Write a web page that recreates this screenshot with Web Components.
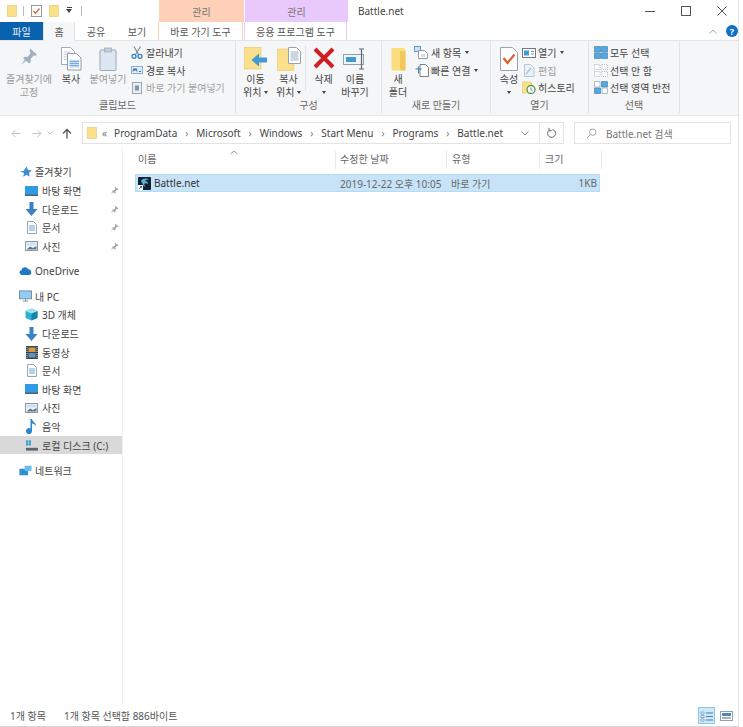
<!DOCTYPE html>
<html lang="ko">
<head>
<meta charset="utf-8">
<title>Battle.net</title>
<style>
html,body{margin:0;padding:0;background:#fff;}
body{font:10px "Noto Sans","Noto Sans CJK KR",sans-serif;color:#444;}
</style>
</head>
<body>
<win-explorer></win-explorer>
<script>
'use strict';

const folderY = 'fill="#fbe08c" stroke="#e6c566" stroke-width=".6"';
const icons = {
	qaFolder: `<svg width="10" height="12" viewBox="0 0 10 12"><rect x=".5" y=".5" width="9" height="11" ${folderY}/></svg>`,
	qaProps: `<svg width="11" height="12" viewBox="0 0 11 12"><rect x=".5" y=".5" width="10" height="11" fill="#fff" stroke="#9a9a9a"/><path d="M2.5 6l2 2.5 4-5" fill="none" stroke="#d9693a" stroke-width="1.3"/></svg>`,
	pin: `<svg width="20" height="20" viewBox="0 0 20 20"><path d="M11 1.5l7 6-2 1.5-1.2-.8-3.4 4 .3 3-1.5 1.3-6-5.3 1.4-1.5 2.9.2 3.2-4-.9-1.3z" fill="#9fb0c0"/><path d="M6 12l-4 6 5.5-4.5z" fill="#aab8c4"/></svg>`,
	copy: `<svg width="22" height="24" viewBox="0 0 22 24"><path d="M1.5.5h9l4 4v13h-13z" fill="#fff" stroke="#a9a9a9"/><path d="M3.5 5h7M3.5 7.500h8M3.500 10h8M3.500 12.500h8" stroke="#c0c8d0"/><path d="M7.500 6.500h9l4.500 4.500v12h-13.500z" fill="#fff" stroke="#8f9aa4"/><path d="M9.500 12.500h9.500v8.500h-9.500z" fill="#cfe2f3"/><path d="M9.500 14.500h9.500M9.500 16.500h9.500M9.500 18.500h9.500" stroke="#5c9bd1" stroke-width=".8"/></svg>`,
	paste: `<svg width="18" height="24" viewBox="0 0 18 24"><rect x="1" y="3" width="16" height="20.500" rx="1" fill="#dce7f2" stroke="#9aa9b5"/><rect x="5.500" y="1" width="7" height="4" fill="#c4cdd5" stroke="#9aa9b5" stroke-width=".7"/></svg>`,
	cut: `<svg width="12" height="13" viewBox="0 0 12 13"><path d="M3 .5l4.500 8M9.500 .5l-5 8" stroke="#7d8790" stroke-width="1.100" fill="none"/><circle cx="3" cy="10.300" r="2" fill="none" stroke="#2f7fc4" stroke-width="1.300"/><circle cx="9" cy="10.300" r="2" fill="none" stroke="#2f7fc4" stroke-width="1.300"/></svg>`,
	copyPath: `<svg width="12" height="8" viewBox="0 0 12 8"><rect x=".5" y=".5" width="11" height="7" fill="#dcecf9" stroke="#7fb0d8"/><path d="M2 5.500l1-3 1 2 1-2 1 3M8 5.500h2" stroke="#33475b" stroke-width=".8" fill="none"/></svg>`,
	pasteLink: `<svg width="10" height="12" viewBox="0 0 10 12"><rect x=".5" y=".500" width="9" height="11" fill="#e9eef3" stroke="#9aa7b2"/><rect x="3" y="3.500" width="4" height="5" fill="#7e94a8"/></svg>`,
	moveTo: `<svg width="24" height="23" viewBox="0 0 24 23"><rect x=".5" y=".5" width="16.500" height="21.500" ${folderY}/><path d="M23 10.500h-8v-4l-7.500 6.500 7.500 6.500v-4h8z" fill="#3f9ad6"/></svg>`,
	copyTo: `<svg width="24" height="24" viewBox="0 0 24 24"><rect x=".5" y="2" width="16.500" height="21.500" ${folderY}/><path d="M11.500.5h8l4 4v12h-12z" fill="#fff" stroke="#9aa3ab"/><path d="M13.500 5h8M13.500 7h8M13.500 9h8M13.500 11h8M13.500 13h8" stroke="#7f9ab0" stroke-width=".8"/></svg>`,
	del: `<svg width="22" height="22" viewBox="0 0 22 22"><path d="M2 2l18 18M20 2L2 20" stroke="#cf1f24" stroke-width="4"/></svg>`,
	rename: `<svg width="24" height="24" viewBox="0 0 24 24"><rect x=".5" y="7.500" width="20" height="10" fill="#f2f6fa" stroke="#8fa0ae"/><rect x="3" y="10" width="10" height="5" fill="#3f9ad6"/><path d="M16 2h5M16 22h5M18.500 2v20" stroke="#5d6770" stroke-width="1.200" fill="none"/></svg>`,
	newFolder: `<svg width="15" height="24" viewBox="0 0 15 24"><path d="M.5 1h12.500l1.500 3v19.500h-14z" fill="#fbdc7e"/><path d="M9 4h5.500v19.500H9z" fill="#f3c95c"/></svg>`,
	newItem: `<svg width="15" height="13" viewBox="0 0 15 13"><rect x=".5" y=".5" width="6" height="5" fill="#cfe2f3" stroke="#5c9bd1"/><path d="M4.500 4.500h6l3 3v5h-9z" fill="#fff" stroke="#8f9aa4"/><rect x="7" y="8" width="4" height="3" fill="#d7dde3"/></svg>`,
	easy: `<svg width="14" height="14" viewBox="0 0 14 14"><path d="M5 1.500h5.500l3 3v9h-8.500z" fill="#fff" stroke="#77828c"/><path d="M.5 6h6M3.500 3.500v7" stroke="#3a7fb8" stroke-width="1"/></svg>`,
	props: `<svg width="18" height="24" viewBox="0 0 18 24"><path d="M.5.5h12l5 5v18h-17z" fill="#fff" stroke="#9aa3ab"/><path d="M3.500 11l4 5 7-8.500" fill="none" stroke="#d9622b" stroke-width="2.200"/></svg>`,
	open: `<svg width="14" height="10" viewBox="0 0 14 10"><rect x=".5" y=".5" width="13" height="9" fill="#fff" stroke="#6e7b86"/><rect x="2" y="2.500" width="5" height="5" fill="#3f9ad6"/><path d="M9 3.500h3M9 6h3" stroke="#8a96a0"/></svg>`,
	edit: `<svg width="12" height="13" viewBox="0 0 12 13"><path d="M1.500.5h6l3.500 3.500v8.500h-9.500z" fill="#eaf2fa" stroke="#b5c7d8"/><path d="M3 10l5-6" stroke="#a9c6e2" stroke-width="1.500"/></svg>`,
	history: `<svg width="14" height="13" viewBox="0 0 14 13"><rect x=".5" y="1" width="9" height="11" ${folderY}/><circle cx="9" cy="8.500" r="4" fill="#fff" stroke="#4c9a46" stroke-width="1.300"/><path d="M9 6.500v2.300l1.500.8" fill="none" stroke="#555" stroke-width=".8"/></svg>`,
	selAll: `<svg width="14" height="13" viewBox="0 0 14 13"><path d="M.5.5h6v5.500h-6zM7.500.5h6v5.500h-6zM.5 7h6v5.500h-6zM7.500 7h6v5.500h-6z" fill="#5aa7dc" stroke="#3f86bd" stroke-width=".7"/></svg>`,
	selNone: `<svg width="14" height="13" viewBox="0 0 14 13"><path d="M.5.5h5.500v5h-5.500zM8 .5h5.500v5H8zM.5 7.500h5.500v5h-5.500zM8 7.500h5.500v5H8z" fill="#fbfcfd" stroke="#b4bcc3" stroke-dasharray="1 1"/></svg>`,
	selInv: `<svg width="14" height="13" viewBox="0 0 14 13"><path d="M.5.5h5.500v5.500h-5.500zM8 7h5.500v5.500H8z" fill="#fbfcfd" stroke="#8fa3b3" stroke-width=".7"/><path d="M7.500.5h6v5.500h-6zM.5 7h6v5.500h-6z" fill="#5aa7dc" stroke="#3f86bd" stroke-width=".7"/></svg>`,
	star: `<svg width="13" height="12" viewBox="0 0 13 12"><path d="M7.500.5l1.500 3.600 3.800.3-2.900 2.500.9 3.800-3.300-2-3.300 2 .9-3.800L.7 5.200l3.800-.3z" fill="#3b8ed0"/></svg>`,
	desktop: `<svg width="13" height="10" viewBox="0 0 13 10"><rect x="0" y="0" width="13" height="9" fill="#2f9be6"/><rect x="0" y="8.500" width="13" height="1.500" fill="#54606a"/></svg>`,
	down: `<svg width="13" height="14" viewBox="0 0 13 14"><path d="M4.500 0h4v7h4L6.500 14 .5 7h4z" fill="#3b82c4"/></svg>`,
	doc: `<svg width="10" height="13" viewBox="0 0 10 13"><path d="M.5.500h6l3 3v9h-9z" fill="#fff" stroke="#9aa7b2"/><path d="M2 5h6M2 7h6M2 9h6" stroke="#5c9bd1" stroke-width=".9"/></svg>`,
	photo: `<svg width="13" height="10" viewBox="0 0 13 10"><rect x=".5" y=".5" width="12" height="9" fill="#f2f5f8" stroke="#8d98a2"/><path d="M1.500 8.500l3.500-3 3 1.500 3.500-2v3.500z" fill="#5a7896"/><rect x="1.500" y="1.500" width="10" height="3" fill="#cfe0ef"/></svg>`,
	cloud: `<svg width="15" height="10" viewBox="0 0 15 10"><path d="M3 9.500a2.800 2.800 0 0 1-.3-5.500 4.300 4.300 0 0 1 8-.9 3.300 3.300 0 0 1 1.300 6.400z" fill="#1f78c4"/></svg>`,
	pc: `<svg width="14" height="12" viewBox="0 0 14 12"><rect x=".5" y=".5" width="13" height="8.500" fill="#8fcdf4" stroke="#7d8b97"/><path d="M4 11.500h6M7 9v2.500" stroke="#7d8b97"/></svg>`,
	cube: `<svg width="13" height="13" viewBox="0 0 13 13"><path d="M6.500.5l6 2.500v7l-6 2.500-6-2.500V3z" fill="#2fb0d6"/><path d="M6.500 5.500l6-2.500v7l-6 2.500z" fill="#1783ad"/><path d="M.5 3l6-2.500 6 2.500-6 2.500z" fill="#9fe2f2"/></svg>`,
	video: `<svg width="12" height="13" viewBox="0 0 12 13"><rect width="12" height="13" fill="#3a4650"/><rect x="2.500" y="1.500" width="7" height="4.500" fill="#d99a3c"/><rect x="2.500" y="7" width="7" height="4.500" fill="#5d93c4"/><path d="M1 1v11M11 1v11" stroke="#c9d2d9" stroke-dasharray="1 1"/></svg>`,
	music: `<svg width="11" height="15" viewBox="0 0 11 15"><path d="M4.500 0h1.500c.3 2.800 4 3.300 4 7-1-1.800-2.500-2.300-4-2.500V12a3 3 0 1 1-1.500-2.500z" fill="#2a86d0"/></svg>`,
	disk: `<svg width="14" height="13" viewBox="0 0 14 13"><rect x="1" y="1" width="2.500" height="2.500" fill="#3b9ad8"/><rect x="4" y="1" width="2.500" height="2.500" fill="#3b9ad8"/><rect x="1" y="4" width="2.500" height="2.500" fill="#3b9ad8"/><rect x="4" y="4" width="2.500" height="2.500" fill="#3b9ad8"/><rect x="1" y="9" width="13" height="3" fill="#5a6670"/></svg>`,
	net: `<svg width="15" height="13" viewBox="0 0 15 13"><rect x=".5" y="4.500" width="10" height="7.500" fill="#2f8fd4"/><rect x="6.500" y="1" width="8" height="6" fill="#6cbcec"/></svg>`,
	pinSmall: `<svg width="9" height="9" viewBox="0 0 9 9"><path d="M5 .5l3.500 3-1 .6-.6-.3-1.500 1.800.1 1.400-.7.600-2.800-2.500.7-.7 1.300.1 1.500-1.800-.4-.6zM2.800 5.500L.7 8.300l2.700-2.200z" fill="#9aa3aa"/></svg>`,
	battle: `<svg width="13" height="13" viewBox="0 0 13 13"><rect width="13" height="13" rx="1" fill="#13222f"/><path d="M3 4c2-3 6-3 8-1-2-.5-3 0-4 1 2 0 3 1 3 3-1-1-3-1-4 0 1 1 1 2 0 3-.5-2-2-4-3-6z" fill="#5aaede"/><rect y="8" width="5" height="5" fill="#fff"/><path d="M1 12l2.500-2.500M2 9.500h1.500V11" stroke="#1b4f8c" fill="none" stroke-width=".8"/></svg>`,
	search: `<svg width="11" height="11" viewBox="0 0 11 11"><circle cx="6.800" cy="4.200" r="3.200" fill="none" stroke="#a5a5a5"/><path d="M4.500 6.500L1 10" stroke="#a5a5a5"/></svg>`,
	refresh: `<svg width="11" height="12" viewBox="0 0 11 12"><path d="M6.500 2.500a4 4 0 1 1-3.500.8M3 .8v3h2.800" fill="none" stroke="#666" stroke-width="1"/></svg>`,
	viewDetail: `<svg width="14" height="12" viewBox="0 0 14 12"><path d="M1 2h3v2H1zM1 5.500h3v2H1zM1 9h3v2H1z" fill="#fff" stroke="#4b7ea6" stroke-width=".6"/><path d="M6 3h7M6 6.500h7M6 10h7" stroke="#4b7ea6"/></svg>`,
	viewLarge: `<svg width="13" height="10" viewBox="0 0 13 10"><rect x=".5" y=".5" width="12" height="9" fill="#fff" stroke="#8fa0ae"/><rect x="2" y="2" width="9" height="3" fill="#4c87b5"/><path d="M2 7h9" stroke="#55606a"/></svg>`
};

// small helper so every element does the same shadow setup
class Base extends HTMLElement {
	constructor(){
		super();
		this.attachShadow({mode:'open'});
	}
	connectedCallback(){
		this.shadowRoot.innerHTML = this.Template;
	}
}

class WinTitlebar extends Base {
	get Template(){
		return `<style>
:host{display:flex;height:22px;background:#fff;align-items:stretch;}
.qa{display:flex;align-items:center;width:159px;box-sizing:border-box;padding-left:7px;}
.qa i{width:1px;height:10px;background:#bbb;margin:0 7px 0 6px;}
.qa b{width:0;height:0;border:3px solid transparent;border-top:4px solid #444;border-bottom:0;position:relative;}
.qa u{width:5px;height:1px;background:#444;margin:0 0 0 -5.500px;transform:translateY(-4px);}
.ctx{display:flex;align-items:center;justify-content:center;color:#777;}
.a{width:85px;background:#fdd0b7;}
.b{width:103px;background:#e9c8fb;margin-left:1px;}
.title{margin-left:10px;flex:1;display:flex;align-items:center;color:#444;}
.win{display:flex;align-items:center;}
.win span{width:36px;display:flex;justify-content:center;}
</style>
<div class="qa">${icons.qaFolder}<i></i>${icons.qaProps}<span style="width:7px"></span>${icons.qaFolder}<span style="width:7px"></span><b></b><u></u><i style="margin-left:9px"></i></div>
<div class="ctx a">관리</div><div class="ctx b">관리</div>
<div class="title">Battle.net</div>
<div class="win">
<span><svg width="10" height="10"><path d="M0 5.500h10" stroke="#555"/></svg></span>
<span><svg width="10" height="10"><rect x=".5" y=".5" width="9" height="9" fill="none" stroke="#555"/></svg></span>
<span style="margin-right:-2px"><svg width="10" height="10"><path d="M.5.500l9 9M9.500.500l-9 9" stroke="#555"/></svg></span>
</div>`;
	}
}

class WinTabs extends Base {
	get Template(){
		return `<style>
:host{display:flex;height:18px;background:#fff;color:#555;position:relative;}
div{display:flex;align-items:center;justify-content:center;box-sizing:border-box;}
.file{width:43px;background:#0a62ae;color:#e8f0f8;}
.home{width:32px;height:19px;background:#f5f6f7;border:1px solid #e3e4e5;border-width:0 1px;z-index:1;}
.t{width:42px;}
.t2{width:40px;margin-left:0;}
.c1{width:85px;margin-left:1px;border:1px solid #fdd0b7;border-width:0 1px;}
.c2{width:103px;margin-left:1px;border:1px solid #e9c8fb;border-width:0 1px;}
.help{position:absolute;right:0;top:3px;display:flex;gap:9px;align-items:center;}
.help b{display:flex;align-items:center;justify-content:center;width:12px;height:12px;border-radius:50%;background:#1072c4;color:#fff;font-size:9px;}
</style>
<div class="file">파일</div><div class="home">홈</div><div class="t">공유</div><div class="t t2">보기</div>
<div class="c1">바로 가기 도구</div><div class="c2">응용 프로그램 도구</div>
<div class="help"><svg width="8" height="5"><path d="M.5 4.500L4 1l3.500 3.500" fill="none" stroke="#aaa"/></svg><b>?</b></div>`;
	}
}

// one ribbon group, with its caption under the buttons
class RbGroup extends Base {
	get Template(){
		const w = this.getAttribute('w');
		const pad = this.getAttribute('pad') || 0;
		return `<style>
:host{display:flex;flex-direction:column;width:${w}px;box-sizing:border-box;border-right:1px solid #e2e3e4;height:72px;}
.body{display:flex;height:58px;padding-left:${pad}px;}
.cap{text-align:center;color:#666;height:14px;line-height:13px;}
</style>
<div class="body"><slot></slot></div><div class="cap">${this.getAttribute('label')}</div>`;
	}
}

class RbLarge extends Base {
	get Template(){
		const lines = this.getAttribute('text').split('|');
		const off = this.hasAttribute('off');
		return `<style>
:host{display:flex;flex-direction:column;align-items:center;width:${this.getAttribute('w')}px;flex:none;padding-top:6px;box-sizing:border-box;color:${off ? '#9a9a9a' : '#444'};}
.ic{height:26px;display:flex;align-items:${this.getAttribute('ic') || 'flex-start'};justify-content:center;}
.t{line-height:12.500px;text-align:center;white-space:nowrap;}
b{display:inline-block;width:0;height:0;border:2.500px solid transparent;border-top:3px solid #444;border-bottom:0;vertical-align:2px;}
</style>
<div class="ic">${icons[this.getAttribute('icon')]}</div>
<div class="t">${lines.map(l=>l.replace('~','<b></b>')).join('<br>')}</div>`;
	}
}

class RbSmall extends Base {
	get Template(){
		const off = this.hasAttribute('off');
		return `<style>
:host{display:flex;align-items:center;height:17.500px;white-space:nowrap;color:${off ? '#a0a0a0' : '#444'};}
.ic{width:${this.getAttribute('iw') || 15}px;display:flex;justify-content:center;flex:none;margin-right:2px;}
b{display:inline-block;width:0;height:0;border:2.500px solid transparent;border-top:3px solid #444;border-bottom:0;margin-left:4px;}
</style>
<div class="ic">${icons[this.getAttribute('icon')]}</div><slot></slot>${this.hasAttribute('drop') ? '<b></b>' : ''}`;
	}
}

class RbCol extends Base {
	get Template(){
		return `<style>:host{display:block;padding-top:3px;margin-left:${this.getAttribute('ml') || 0}px;}</style><slot></slot>`;
	}
}

class WinRibbon extends Base {
	get Template(){
		return `<style>
:host{display:flex;height:75px;box-sizing:border-box;background:#f5f6f7;border-bottom:1px solid #e6e7e8;font-size:10px;}
.v{width:1px;height:46px;background:#e4e5e6;margin:4px 1px 0 0;flex:none;}
</style>
<rb-group w="236" pad="5" label="클립보드">
	<rb-large w="48" icon="pin" text="즐겨찾기에|고정" off></rb-large>
	<rb-large w="36" icon="copy" text="복사"></rb-large>
	<rb-large w="38" icon="paste" text="붙여넣기" off></rb-large>
	<rb-col ml="2">
		<rb-small icon="cut">잘라내기</rb-small>
		<rb-small icon="copyPath">경로 복사</rb-small>
		<rb-small icon="pasteLink" off>바로 가기 붙여넣기</rb-small>
	</rb-col>
</rb-group>
<rb-group w="146" pad="3" label="구성">
	<rb-large w="33" icon="moveTo" text="이동|위치 ~"></rb-large>
	<rb-large w="33" icon="copyTo" text="복사|위치 ~"></rb-large>
	<div class="v"></div>
	<rb-large w="33" icon="del" text="삭제|~"></rb-large>
	<rb-large w="30" icon="rename" text="이름|바꾸기"></rb-large>
</rb-group>
<rb-group w="109" pad="2" label="새로 만들기">
	<rb-large w="28" icon="newFolder" text="새|폴더"></rb-large>
	<rb-col ml="2">
		<rb-small icon="newItem" drop>새 항목</rb-small>
		<rb-small icon="easy" drop>빠른 연결</rb-small>
	</rb-col>
</rb-group>
<rb-group w="98" pad="4" label="열기">
	<rb-large w="28" icon="props" text="속성|~"></rb-large>
	<rb-col ml="-2">
		<rb-small icon="open" drop>열기</rb-small>
		<rb-small icon="edit" off>편집</rb-small>
		<rb-small icon="history">히스토리</rb-small>
	</rb-col>
</rb-group>
<rb-group w="91" pad="5" label="선택">
	<rb-col>
		<rb-small iw="14" icon="selAll">모두 선택</rb-small>
		<rb-small iw="14" icon="selNone">선택 안 함</rb-small>
		<rb-small iw="14" icon="selInv">선택 영역 반전</rb-small>
	</rb-col>
</rb-group>`;
	}
}

class WinAddress extends Base {
	get Template(){
		const path = ['ProgramData','Microsoft','Windows','Start Menu','Programs','Battle.net'];
		const crumbs = path.map(p=>`<span>${p}</span>`).join('<em>›</em>');
		return `<style>
:host{display:flex;height:32px;box-sizing:border-box;padding:6px 0 4px;align-items:stretch;background:#fff;color:#444;}
.nav{width:82px;display:flex;align-items:center;flex:none;color:#bbb;}
.nav svg{flex:none;}
.box{border:1px solid #e3e3e3;display:flex;align-items:center;box-sizing:border-box;}
.path{width:458px;padding-left:4px;gap:0;}
.path span{white-space:nowrap;}
.path em{font-style:normal;color:#777;width:19px;text-align:center;flex:none;font-size:10px;}
.path .ll{color:#777;margin:0 7px 0 5px;}
.path .end{margin-left:auto;margin-right:10px;}
.ref{width:24px;border-left:0;justify-content:center;}
.search{width:157px;margin-left:10px;padding-left:11px;color:#777;gap:9px;}
</style>
<div class="nav">
<svg style="margin-left:11px" width="10" height="9"><path d="M9.500 4.500H1M4.500 1L1 4.500 4.500 8" fill="none" stroke="#c4c4c4"/></svg>
<svg style="margin-left:11px" width="10" height="9"><path d="M.5 4.500H9M5.500 1L9 4.500 5.500 8" fill="none" stroke="#c4c4c4"/></svg>
<svg style="margin-left:5px" width="6" height="4"><path d="M.5.500L3 3 5.500.500" fill="none" stroke="#c4c4c4"/></svg>
<svg style="margin-left:9px" width="10" height="11"><path d="M5 10.500V1.500M1 5.500L5 1.500 9 5.500" fill="none" stroke="#555" stroke-width="1.300"/></svg>
</div>
<div class="box path">${icons.qaFolder}<span class="ll">«</span>${crumbs}<svg class="end" width="8" height="5"><path d="M.5.500L4 4 7.500.500" fill="none" stroke="#888"/></svg></div>
<div class="box ref">${icons.refresh}</div>
<div class="box search">${icons.search}<span>Battle.net 검색</span></div>`;
	}
}

class NavItem extends Base {
	get Template(){
		const sub = this.hasAttribute('sub');
		return `<style>
:host{display:flex;align-items:center;height:18.600px;position:relative;padding-left:${sub ? 25 : 19}px;box-sizing:border-box;color:#444;white-space:nowrap;${this.hasAttribute('sel') ? 'background:#d9d9d9;' : ''}}
.ic{width:${sub ? 13 : 13}px;display:flex;justify-content:center;margin-right:${sub ? 4 : 3}px;flex:none;}
.pin{position:absolute;left:110px;top:5px;display:flex;}
</style>
<div class="ic">${icons[this.getAttribute('icon')]}</div><slot></slot>${this.hasAttribute('pin') ? `<div class="pin">${icons.pinSmall}</div>` : ''}`;
	}
}

class WinNav extends Base {
	get Template(){
		return `<style>
:host{display:block;width:122px;flex:none;box-sizing:content-box;padding-top:14.700px;border-right:1px solid #f0f0f0;}
.g{margin-bottom:6.400px;}
</style>
<div class="g">
	<nav-item icon="star">즐겨찾기</nav-item>
	<nav-item sub pin icon="desktop">바탕 화면</nav-item>
	<nav-item sub pin icon="down">다운로드</nav-item>
	<nav-item sub pin icon="doc">문서</nav-item>
	<nav-item sub pin icon="photo">사진</nav-item>
</div>
<div class="g"><nav-item icon="cloud">OneDrive</nav-item></div>
<div class="g">
	<nav-item icon="pc">내 PC</nav-item>
	<nav-item sub icon="cube">3D 개체</nav-item>
	<nav-item sub icon="down">다운로드</nav-item>
	<nav-item sub icon="video">동영상</nav-item>
	<nav-item sub icon="doc">문서</nav-item>
	<nav-item sub icon="desktop">바탕 화면</nav-item>
	<nav-item sub icon="photo">사진</nav-item>
	<nav-item sub icon="music">음악</nav-item>
	<nav-item sub sel icon="disk">로컬 디스크 (C:)</nav-item>
</div>
<div class="g"><nav-item icon="net">네트워크</nav-item></div>`;
	}
}

class WinFiles extends Base {
	get Template(){
		return `<style>
:host{display:block;flex:1;padding:3px 0 0 12px;position:relative;color:#444;}
.row{display:grid;grid-template-columns:201px 111px 93px 62px;width:467px;}
.head{height:18px;color:#666;align-items:center;margin-bottom:5px;}
.head div{border-right:1px solid #e8e8e8;height:18px;line-height:17px;padding-left:3px;box-sizing:border-box;}
.head div + div{padding-left:4px;}
.head div:nth-child(3),.head div:nth-child(4){padding-left:5px;}
.file{height:18px;width:465px;box-sizing:border-box;background:#c6e3f8;border:1px solid #b4dcf7;grid-template-columns:200px 111px 93px 59px;align-items:center;}
.file div{padding-left:4px;color:#666;white-space:nowrap;}
.file .n{display:flex;align-items:center;gap:3px;padding-left:2px;color:#333;}
.file .s{text-align:right;padding:0 2px 0 0;}
.sort{position:absolute;left:107px;top:2px;}
</style>
<svg class="sort" width="8" height="5"><path d="M.5 4L4 1l3.500 3" fill="none" stroke="#999"/></svg>
<div class="row head"><div>이름</div><div>수정한 날짜</div><div>유형</div><div>크기</div></div>
<div class="row file"><div class="n">${icons.battle}<span>Battle.net</span></div><div>2019-12-22 오후 10:05</div><div>바로 가기</div><div class="s">1KB</div></div>`;
	}
}

class WinStatus extends Base {
	get Template(){
		return `<style>
:host{display:flex;height:21px;align-items:center;position:relative;background:#fff;color:#555;box-sizing:border-box;padding:0 3px 1px 10px;border-bottom:1px solid #d5d5d5;}
span + span{margin-left:18px;}
.v{margin-left:auto;display:flex;align-items:center;gap:3px;}
.v div{display:flex;align-items:center;justify-content:center;width:17px;height:17px;box-sizing:border-box;}
.v .on{background:#cde8fb;border:1px solid #8fc7ec;}
</style>
<span>1개 항목</span><span>1개 항목 선택함 886바이트</span>
<div class="v"><div class="on">${icons.viewDetail}</div><div>${icons.viewLarge}</div></div>`;
	}
}

class WinExplorer extends Base {
	get Template(){
		return `<style>
:host{display:flex;height:727px;width:743px;background:#fff;font:10px "Noto Sans","Noto Sans CJK KR",sans-serif;overflow:hidden;}
.win{width:738px;height:727px;display:flex;flex-direction:column;}
.main{flex:1;display:flex;min-height:0;}
.edge{flex:1;border-left:1px solid #e4e4e4;background:#fff;}
</style>
<div class="win">
	<win-titlebar></win-titlebar>
	<win-tabs></win-tabs>
	<div style="height:1px;background:#e3e4e5"></div>
	<win-ribbon></win-ribbon>
	<win-address></win-address>
	<div class="main"><win-nav></win-nav><win-files></win-files></div>
	<win-status></win-status>
</div>
<div class="edge"></div>`;
	}
}

// children first, WinExplorer last so the whole tree upgrades in one go
customElements.define('win-titlebar',WinTitlebar);
customElements.define('win-tabs',WinTabs);
customElements.define('rb-group',RbGroup);
customElements.define('rb-large',RbLarge);
customElements.define('rb-small',RbSmall);
customElements.define('rb-col',RbCol);
customElements.define('win-ribbon',WinRibbon);
customElements.define('win-address',WinAddress);
customElements.define('nav-item',NavItem);
customElements.define('win-nav',WinNav);
customElements.define('win-files',WinFiles);
customElements.define('win-status',WinStatus);
customElements.define('win-explorer',WinExplorer);
</script>
</body>
</html>
